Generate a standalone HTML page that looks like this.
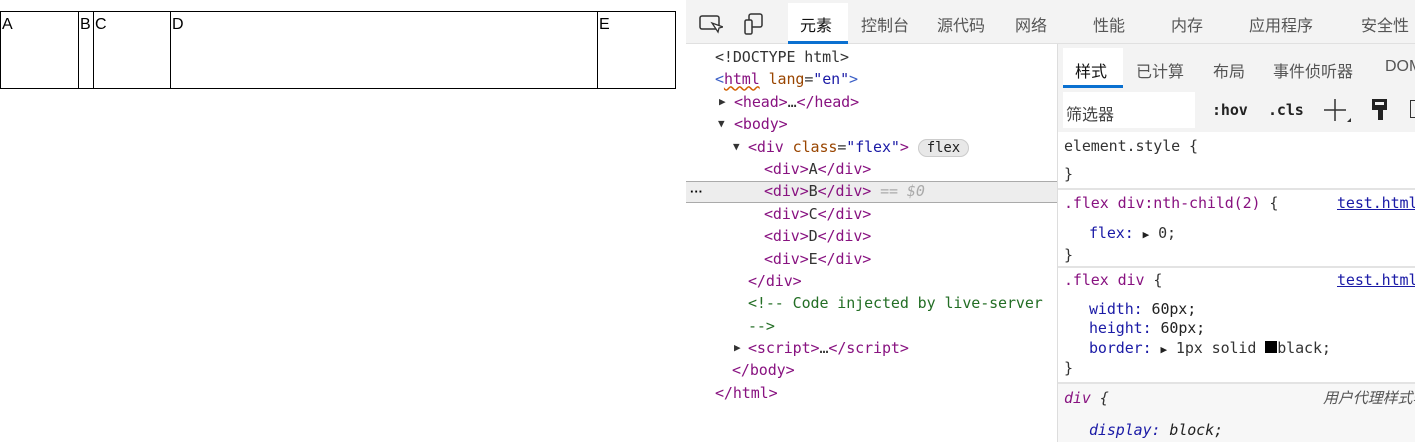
<!DOCTYPE html><html><head><style>
*{margin:0;padding:0;box-sizing:border-box}
html,body{width:1415px;height:442px;overflow:hidden}
body{background:#fff;font-family:"Liberation Sans","Noto Sans CJK SC",sans-serif;position:relative}
.b{position:absolute;top:11px;height:78px;border:1px solid #000;font-size:16px;line-height:16px;padding-top:5px;padding-left:1px}
.a{position:absolute;white-space:nowrap}
.m{font-family:"DejaVu Sans Mono","Liberation Mono",monospace;font-size:15px;letter-spacing:-0.1px}
.t{color:#881280}.at{color:#994500}.v{color:#1a1aa6}.p{color:#3b5fc6}
.tab{position:absolute;top:12px;font-size:16px;color:#555}
.l{height:22.4px;line-height:22.4px;position:relative;white-space:nowrap}
.tri{position:absolute;left:-16px;top:0;font-size:11px;color:#333}
</style></head><body>
<div class="b" style="left:0;width:79px">A</div>
<div class="b" style="left:78px;width:16px">B</div>
<div class="b" style="left:93px;width:78px">C</div>
<div class="b" style="left:170px;width:428px">D</div>
<div class="b" style="left:597px;width:79px">E</div>

<div style="position:absolute;left:686px;top:0;width:729px;height:44px;background:#f3f3f3;border-bottom:1px solid #e0e0e0"></div>
<svg class="a" style="left:699px;top:14px" width="24" height="20"><rect x="1" y="2" width="19" height="13" rx="2" fill="none" stroke="#333" stroke-width="1.5"/><path d="M13 9l6 9 1-4 4-1z" fill="#fff" stroke="#333" stroke-width="1.3"/></svg>
<svg class="a" style="left:743px;top:12px" width="24" height="24"><rect x="6" y="2" width="13" height="13" rx="2" fill="none" stroke="#333" stroke-width="1.5"/><rect x="2" y="8" width="7" height="14" rx="1.5" fill="#f3f3f3" stroke="#333" stroke-width="1.5"/></svg>
<div style="position:absolute;left:788px;top:3px;width:60px;height:41px;background:#fff;border-bottom:3px solid #0a70d0"></div>
<div class="tab" style="left:800px;color:#111">元素</div>
<div class="tab" style="left:861px">控制台</div>
<div class="tab" style="left:937px">源代码</div>
<div class="tab" style="left:1015px">网络</div>
<div class="tab" style="left:1093px">性能</div>
<div class="tab" style="left:1171px">内存</div>
<div class="tab" style="left:1249px">应用程序</div>
<div class="tab" style="left:1361px">安全性</div>

<div style="position:absolute;left:686px;top:181px;width:371px;height:22px;background:#ededed;border-top:1px solid #aaa;border-bottom:1px solid #aaa"></div>
<div class="a m" style="left:715px;top:46px;color:#333">
<div class="l">&lt;!DOCTYPE html&gt;</div>
<div class="l"><span class="p">&lt;</span><span class="t" style="text-decoration:underline wavy #d06000">html</span> <span class="at">lang</span>=<span class="v">"en"</span><span class="p">&gt;</span></div>
<div class="l" style="margin-left:19px"><span class="tri" style="left:-15px">▶</span><span class="t">&lt;head&gt;</span>…<span class="t">&lt;/head&gt;</span></div>
<div class="l" style="margin-left:19px"><span class="tri" style="left:-16px">▼</span><span class="t">&lt;body&gt;</span></div>
<div class="l" style="margin-left:33px"><span class="tri" style="left:-15px">▼</span><span class="t">&lt;div</span> <span class="at">class</span>=<span class="v">"flex"</span><span class="t">&gt;</span> <span style="background:#e8e8e8;border:1px solid #ccc;border-radius:9px;padding:0 8px;color:#222;font-size:14px">flex</span></div>
<div class="l" style="margin-left:49px"><span class="t">&lt;div&gt;</span>A<span class="t">&lt;/div&gt;</span></div>
<div class="l" style="margin-left:49px"><span class="t">&lt;div&gt;</span>B<span class="t">&lt;/div&gt;</span> <span style="color:#aaa;font-style:italic">== $0</span></div>
<div class="l" style="margin-left:49px"><span class="t">&lt;div&gt;</span>C<span class="t">&lt;/div&gt;</span></div>
<div class="l" style="margin-left:49px"><span class="t">&lt;div&gt;</span>D<span class="t">&lt;/div&gt;</span></div>
<div class="l" style="margin-left:49px"><span class="t">&lt;div&gt;</span>E<span class="t">&lt;/div&gt;</span></div>
<div class="l" style="margin-left:33px"><span class="t">&lt;/div&gt;</span></div>
<div class="l" style="margin-left:33px;color:#236e25">&lt;!-- Code injected by live-server</div>
<div class="l" style="margin-left:33px;color:#236e25">--&gt;</div>
<div class="l" style="margin-left:33px"><span class="tri" style="left:-14px">▶</span><span class="t">&lt;script&gt;</span>…<span class="t">&lt;/script&gt;</span></div>
<div class="l" style="margin-left:17px"><span class="t">&lt;/body&gt;</span></div>
<div class="l"><span class="t">&lt;/html&gt;</span></div>
</div>
<div class="a" style="left:690px;top:184px;font-size:13px;font-weight:bold">···</div>

<div style="position:absolute;left:1057px;top:44px;width:358px;height:398px;border-left:1px solid #ddd;background:#fff"></div>
<div style="position:absolute;left:1058px;top:44px;width:357px;height:44px;background:#f3f3f3"></div>
<div style="position:absolute;left:1063px;top:48px;width:60px;height:40px;background:#fff;border-bottom:3px solid #0a70d0"></div>
<div class="tab" style="left:1075px;top:58px;color:#111">样式</div>
<div class="tab" style="left:1136px;top:58px">已计算</div>
<div class="tab" style="left:1213px;top:58px">布局</div>
<div class="tab" style="left:1273px;top:58px">事件侦听器</div>
<div class="tab" style="left:1385px;top:58px">DOM</div>
<div style="position:absolute;left:1058px;top:88px;width:357px;height:44px;background:#f3f3f3"></div>
<div style="position:absolute;left:1063px;top:92px;width:132px;height:36px;background:#fff"></div>
<div class="a" style="left:1066px;top:101px;font-size:16px;color:#444">筛选器</div>
<div class="a m" style="left:1212px;top:101px;font-weight:bold;color:#222">:hov</div>
<div class="a m" style="left:1268px;top:101px;font-weight:bold;color:#222">.cls</div>
<svg class="a" style="left:1323px;top:98px" width="30" height="26"><path d="M12 1v22M1 12h22" stroke="#333" stroke-width="1.5"/><path d="M24 24l4-4v4z" fill="#333"/></svg>
<svg class="a" style="left:1370px;top:98px" width="20" height="24"><path d="M2 1h15v11h-4v10h-5v-10h-6z" fill="#222"/><rect x="5" y="4" width="9" height="3" fill="#f3f3f3"/></svg>
<div class="a" style="left:1410px;top:100px;width:6px;height:18px;border:1.5px solid #333;border-right:0"></div>

<div class="a m" style="left:1058px;top:132px;width:357px;color:#333">
<div style="height:58px;border-bottom:2px solid #e3e3e3;padding:0 6px;line-height:28px">element.style {<br>}</div>
<div style="height:78px;border-bottom:2px solid #e3e3e3;padding:3px 6px;line-height:20px;position:relative"><span class="t">.flex div:nth-child(2)</span> {<span style="position:absolute;left:279px;color:#1a1aa6;text-decoration:underline">test.html</span><div style="margin:10px 0 0 25px;color:#1a1aa6">flex: <span style="color:#222;font-size:11px">▶</span> <span style="color:#333">0;</span></div>}</div>
<div style="height:116px;border-bottom:2px solid #e3e3e3;padding:3px 6px;line-height:19.5px;position:relative"><span class="t">.flex div</span> {<span style="position:absolute;left:279px;color:#1a1aa6;text-decoration:underline">test.html</span><div style="margin:9px 0 0 25px;color:#1a1aa6">width: <span style="color:#222">60px;</span><br>height: <span style="color:#222">60px;</span><br>border: <span style="color:#222;font-size:11px">▶</span> <span style="color:#333">1px solid <span style="display:inline-block;width:12px;height:12px;background:#000"></span>black;</span></div>}</div>
<div style="height:80px;background:#f7f7f7;padding:4px 6px;line-height:20px;font-style:italic;position:relative"><span class="t">div</span> {<span style="position:absolute;left:265px;color:#555;font-family:'Noto Sans CJK SC',sans-serif">用户代理样式表</span><div style="margin:12px 0 0 25px;color:#1a1aa6">display: <span style="color:#222">block;</span></div></div>
</div>
</body></html>
